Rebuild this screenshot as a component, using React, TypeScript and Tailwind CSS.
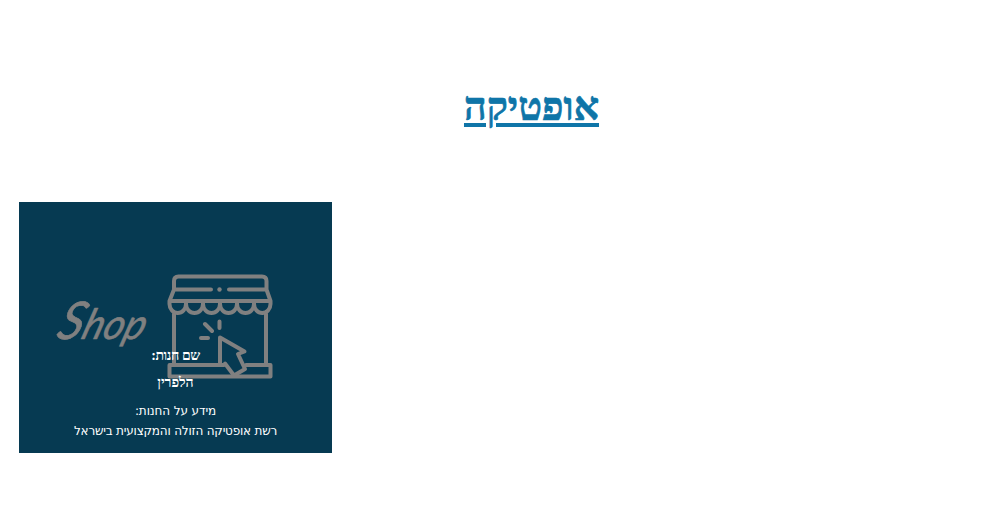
import React from "react";

function ShopIllustration() {
  return (
    <svg className="absolute inset-0 h-[251px] w-[313px]" viewBox="19 202 313 251" fill="none" stroke="#808080" strokeWidth="4" strokeLinecap="round" strokeLinejoin="round" aria-hidden="true">
      <text direction="ltr" transform="translate(55 339) skewX(-18)" fill="#808080" stroke="#808080" strokeWidth="0.6" fontFamily="'Lato', sans-serif" fontStyle="italic" fontSize="42" textLength="87" lengthAdjust="spacingAndGlyphs"><tspan fontSize="52">S</tspan>hop</text>
      <path d="M174 289.500V281Q174 276.500 178.500 276.500H262Q266.500 276.500 266.500 281V289.500L270.500 301V304A8.200 9 0 0 1 254 304A8.500 9 0 0 1 237 304A8.500 9 0 0 1 220 304A8.500 9 0 0 1 203 304A8.500 9 0 0 1 186 304A8.200 9 0 0 1 169.500 304V301ZM170 301H270M186 301V304M203 301V304M220 301V304M237 301V304M254 301V304M174 289.500H211M229 289.500H266" />
      <circle cx="219.500" cy="289.500" r="2.200" fill="#808080" stroke="none" />
      <path d="M174 314V365M266 314V365M224 365H169.500V376.500H270.500V365H246M205 324L212 331M219.500 321.500V328M201 338H208" />
      <path d="M220 365V337.500L244.500 351.500L238 354L245 369L234 375.500L225 363.500" />
    </svg>
  );
}

export default function App() {
  return (
    <main dir="rtl" className="h-[525px] w-[999px] overflow-hidden bg-white">
      <header className="flex h-[202px] justify-center pt-[84px] pl-[64px]">
        <h1 className="h-fit whitespace-nowrap font-['Liberation_Serif',serif] text-[39.5px] leading-[46px] font-bold text-[#0f75a8] [-webkit-text-stroke:0.7px_#0f75a8]">
          <a href="#" className="underline decoration-[4px] underline-offset-[3px]">אופטיקה</a>
        </h1>
      </header>
      <section className="mr-auto ml-[19px] w-[313px]">
        <article className="relative h-[251px] bg-[#063a52] text-center text-white">
          <ShopIllustration />
          <div className="relative flex flex-col items-center pt-[144px] whitespace-nowrap">
            <h2 className="font-['Liberation_Serif',serif] text-[14px] leading-[20px] font-bold tracking-[-0.4px]">שם חנות:</h2>
            <p className="mt-[7px] font-['Liberation_Serif',serif] text-[14px] leading-[20px] font-bold">הלפרין</p>
            <h3 className="mt-[8px] font-['DejaVu_Sans',sans-serif] text-[12px] leading-[20px] font-normal tracking-[-0.1px]">מידע על החנות:</h3>
            <p className="font-['DejaVu_Sans',sans-serif] text-[12px] leading-[20px] tracking-[-0.2px]">רשת אופטיקה הזולה והמקצועית בישראל</p>
          </div>
        </article>
      </section>
    </main>
  );
}
